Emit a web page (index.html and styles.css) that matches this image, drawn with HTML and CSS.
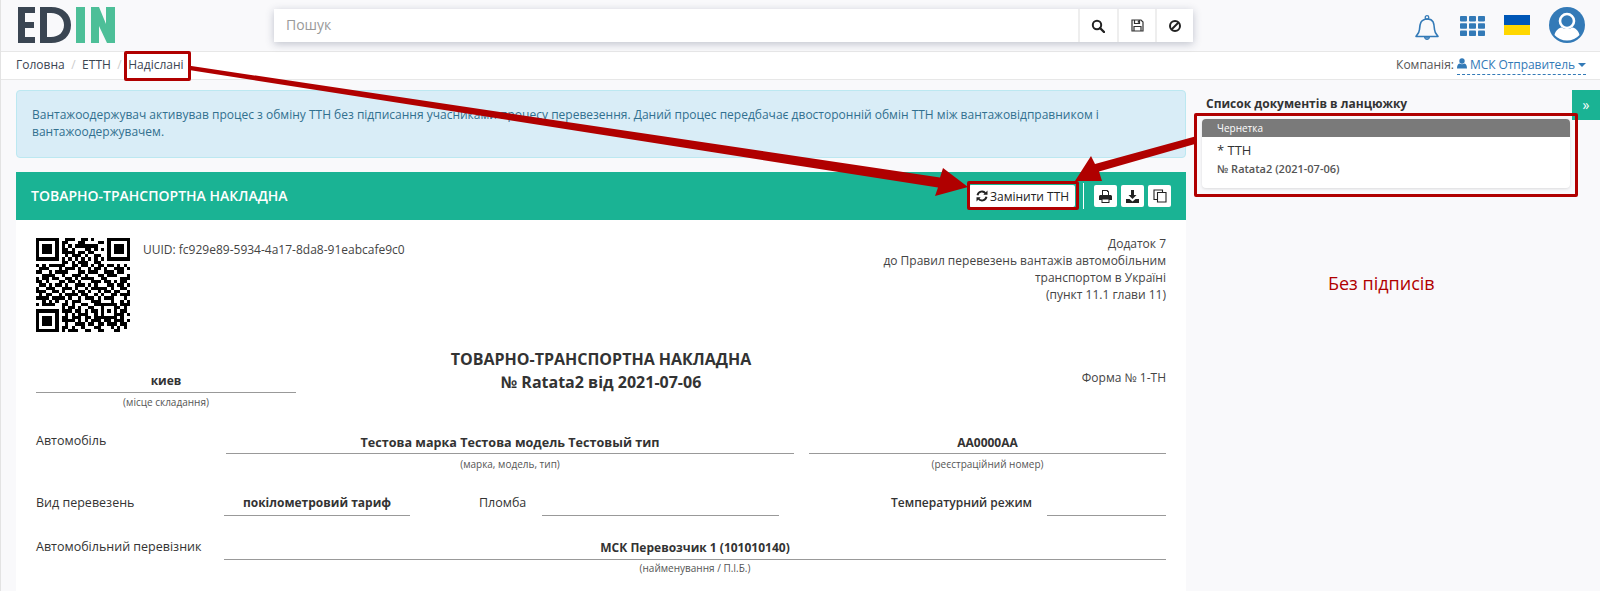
FILE: index.html
```html
<!DOCTYPE html>
<html lang="uk">
<head>
<meta charset="utf-8">
<title>ТОВАРНО-ТРАНСПОРТНА НАКЛАДНА</title>
<link rel="stylesheet" href="styles.css">
</head>
<body>
<div class="page">
  <header class="topbar">
    <svg class="logo" width="100" height="36" viewBox="0 0 100 36" aria-label="EDIN">
      <path fill="#3a4552" d="M0 0h17v6H7v9h9v6H7v9h10v6H0zM22 0h11c12 0 20 7 20 18s-8 18-20 18H22zm7 6v24h4c8 0 13-5 13-12S41 6 33 6z"/>
      <path fill="#4dbf98" d="M58 0h9v36h-9zM73 0h8l7 17V0h9v36h-8L81 19v17h-8z"/>
    </svg>
    <div class="search">
      <div class="search-input">Пошук</div>
      <button class="search-btn"><svg width="14" height="14" viewBox="0 0 14 14"><circle cx="6" cy="6" r="4.2" fill="none" stroke="#222" stroke-width="2"/><path d="M9 9l4 4" stroke="#222" stroke-width="2.4" stroke-linecap="round"/></svg></button>
      <button class="search-btn"><svg width="13" height="13" viewBox="0 0 13 13"><path fill="none" stroke="#333" stroke-width="1.2" d="M1 1h9l2 2v9H1z"/><path fill="none" stroke="#333" stroke-width="1.2" d="M3.5 1v3.5h5V1M3 12V7.5h7V12"/><path fill="#333" d="M6.8 1.6h1.2v2.2H6.8z"/></svg></button>
      <button class="search-btn"><svg width="14" height="14" viewBox="0 0 14 14"><circle cx="7" cy="7" r="5" fill="none" stroke="#222" stroke-width="2"/><path d="M3.5 10.5l7-7" stroke="#222" stroke-width="2"/></svg></button>
    </div>
    <div class="top-icons">
      <svg class="ic-bell" width="24" height="28" viewBox="0 0 24 28"><path fill="none" stroke="#337ab7" stroke-width="1.6" stroke-linejoin="round" d="M1 22.5c0-1 3-2 3.5-7 .4-5 .6-10 7.500-10.500s7.100 5.500 7.500 10.500c.5 5 3.500 6 3.500 7z"/><circle cx="12" cy="3.500" r="1.800" fill="none" stroke="#337ab7" stroke-width="1.300"/><path fill="#6d9cc7" stroke="#337ab7" d="M9.500 23a2.500 2.500 0 0 0 5 0z"/></svg>
      <svg class="ic-grid" width="25" height="20" viewBox="0 0 25 20"><g fill="#337ab7"><rect width="7" height="5.400" rx=".8"/><rect x="9" width="7" height="5.400" rx=".8"/><rect x="18" width="7" height="5.400" rx=".8"/><rect y="7.300" width="7" height="5.400" rx=".8"/><rect x="9" y="7.300" width="7" height="5.400" rx=".8"/><rect x="18" y="7.300" width="7" height="5.400" rx=".8"/><rect y="14.600" width="7" height="5.400" rx=".8"/><rect x="9" y="14.600" width="7" height="5.400" rx=".8"/><rect x="18" y="14.600" width="7" height="5.400" rx=".8"/></g></svg>
      <svg class="ic-flag" width="26" height="20" viewBox="0 0 26 20"><rect width="26" height="10" fill="#0057b7"/><rect y="10" width="26" height="10" fill="#ffd700"/></svg>
      <svg class="ic-user" width="36" height="36" viewBox="0 0 36 36"><circle cx="18" cy="18" r="18" fill="#337ab7"/><circle cx="18" cy="14" r="7" fill="#337ab7" stroke="#fff" stroke-width="2.600"/><path fill="#fff" d="M5.500 28c1-5 5-7.500 7.500-7.500 1.500 1 3 1.500 5 1.500s3.500-.5 5-1.500c2.500 0 6.500 2.500 7.500 7.500-3 3.500-7.500 5.500-12.500 5.500S8.500 31.500 5.500 28z"/></svg>
    </div>
  </header>

  <nav class="crumbs">
    <ol class="crumb-list">
      <li>Головна</li><li class="sep">/</li><li>ЕТТН</li><li class="sep">/</li><li>Надіслані</li>
    </ol>
    <div class="company">Компанія:
      <span class="company-link"><svg width="10" height="11" viewBox="0 0 10 11"><circle cx="5" cy="3" r="2.700" fill="#337ab7"/><path fill="#337ab7" d="M0 10.500C0 7.500 1 6 2.500 5.500c1.500 1 3.500 1 5 0C9 6 10 7.500 10 10.500z"/></svg> МСК Отправитель <i class="caret"></i></span>
    </div>
  </nav>

  <main class="main">
    <section class="content">
      <div class="alert">Вантажоодержувач активував процес з обміну ТТН без підписання учасниками процесу перевезення. Даний процес передбачає двосторонній обмін ТТН між вантажовідправником і вантажоодержувачем.</div>

      <div class="doc-bar">
        <h2 class="doc-bar-title">ТОВАРНО-ТРАНСПОРТНА НАКЛАДНА</h2>
        <div class="doc-actions">
          <button class="btn btn-text"><svg width="12" height="12" viewBox="0 0 12 12"><path fill="none" stroke="#222" stroke-width="1.900" d="M1.500 5.200A4.500 4.500 0 0 1 9.600 3.500M10.500 6.800A4.500 4.500 0 0 1 2.400 8.500"/><path fill="#222" d="M11.500.6v4.200H7.300zM.5 11.400V7.200h4.200z"/></svg> Замінити ТТН</button>
          <span class="divider"></span>
          <button class="btn btn-icon"><svg width="13" height="13" viewBox="0 0 13 13"><path fill="#222" d="M3 0h5.500L10 1.500V5H9V2H8V1H4v4H3zM0 6.500C0 5.700.7 5 1.500 5h10c.8 0 1.500.7 1.500 1.500V10h-2.500v3h-8v-3H0zm3.500 3v2.500h6V9.500z"/></svg></button>
          <button class="btn btn-icon"><svg width="13" height="13" viewBox="0 0 13 13"><path fill="#222" d="M5 0h3v5h2.500L6.500 9 2.500 5H5zM0 9h3.500l3 2.500 3-2.500H13v4H0z"/></svg></button>
          <button class="btn btn-icon"><svg width="14" height="14" viewBox="0 0 14 14"><path fill="none" stroke="#222" stroke-width="1.100" d="M9.500 3V1H1v9.500h3M4.500 3.500h8.500V13H4.500z"/></svg></button>
        </div>
      </div>

      <article class="doc">
        <div class="doc-head">
          <svg class="qr" width="94" height="94" viewBox="0 0 29 29" shape-rendering="crispEdges">
            <path fill-rule="evenodd" d="M0 0h7v7H0zM1 1v5h5V1zM2 2h3v3H2zM22 0h7v7h-7zM23 1v5h5V1zM24 2h3v3h-3zM0 22h7v7H0zM1 23v5h5v-5zM2 24h3v3H2zM20 20h5v5h-5zM21 21v3h3v-3zM22 22h1v1h-1z"/>
            <path fill="none" stroke="#000" d="M9 .5h3M14 .5h2M17 .5h1M8 1.500h2M13 1.500h2M19 1.500h2M8 2.500h1M10 2.500h1M12 2.500h7M8 3.500h2M11 3.500h1M15 3.500h2M18 3.500h1M20 3.500h1M8 4.500h4M13 4.500h2M16 4.500h2M9 5.500h1M11 5.500h3M15 5.500h1M18 5.500h2M8 6.500h1M10 6.500h1M12 6.500h1M14 6.500h1M16 6.500h1M18 6.500h1M20 6.500h1M8 7.500h2M11 7.500h1M13 7.500h3M18 7.500h2M0 8.500h1M2 8.500h1M4 8.500h5M11 8.500h2M14 8.500h2M17 8.500h1M19 8.500h2M22 8.500h2M25 8.500h1M27 8.500h1M1 9.500h3M7 9.500h1M9 9.500h3M13 9.500h1M16 9.500h1M18 9.500h2M21 9.500h1M24 9.500h3M28 9.500h1M0 10.500h2M4 10.500h1M6 10.500h4M13 10.500h2M16 10.500h3M21 10.500h3M25 10.500h2M2 11.500h4M8 11.500h1M11 11.500h3M15 11.500h1M19 11.500h2M22 11.500h3M28 11.500h1M0 12.500h1M2 12.500h2M5 12.500h2M9 12.500h2M12 12.500h1M14 12.500h4M20 12.500h2M26 12.500h1M27 12.500h2M0 13.500h2M3 13.500h1M7 13.500h2M10 13.500h2M13 13.500h1M17 13.500h3M21 13.500h2M24 13.500h1M26 13.500h2M1 14.500h2M4 14.500h1M6 14.500h2M9 14.500h1M12 14.500h3M16 14.500h1M18 14.500h1M22 14.500h2M25 14.500h2M28 14.500h1M0 15.500h1M3 15.500h3M8 15.500h3M12 15.500h1M15 15.500h1M17 15.500h5M23 15.500h1M26 15.500h2M0 16.500h3M5 16.500h2M8 16.500h1M11 16.500h1M13 16.500h2M16 16.500h1M19 16.500h1M21 16.500h2M24 16.500h2M28 16.500h1M1 17.500h1M3 17.500h2M7 17.500h1M9 17.500h4M14 17.500h2M18 17.500h1M20 17.500h1M23 17.500h2M26 17.500h3M0 18.500h4M5 18.500h4M10 18.500h1M13 18.500h1M15 18.500h3M19 18.500h1M21 18.500h3M27 18.500h1M2 19.500h1M4 19.500h1M6 19.500h1M9 19.500h1M11 19.500h3M17 19.500h3M23 19.500h1M26 19.500h1M28 19.500h1M0 20.500h1M2 20.500h4M8 20.500h2M11 20.500h1M14 20.500h2M18 20.500h2M26 20.500h3M8 21.500h1M10 21.500h2M13 21.500h1M16 21.500h2M25 21.500h1M27 21.500h1M8 22.500h3M12 22.500h2M15 22.500h1M17 22.500h2M26 22.500h2M9 23.500h1M11 23.500h1M13 23.500h3M18 23.500h1M25 23.500h2M28 23.500h1M8 24.500h2M11 24.500h3M15 24.500h2M18 24.500h2M26 24.500h1M8 25.500h4M13 25.500h1M15 25.500h1M17 25.500h3M21 25.500h2M24 25.500h3M28 25.500h1M9 26.500h1M12 26.500h3M16 26.500h2M19 26.500h2M22 26.500h3M26 26.500h2M8 27.500h2M11 27.500h1M14 27.500h1M18 27.500h2M23 27.500h1M25 27.500h1M27 27.500h1M8 28.500h1M10 28.500h3M15 28.500h2M19 28.500h2M24 28.500h2"/>
          </svg>
          <div class="uuid">UUID: fc929e89-5934-4a17-8da8-91eabcafe9c0</div>
          <div class="annex">Додаток 7<br>до Правил перевезень вантажів автомобільним<br>транспортом в Україні<br>(пункт 11.1 глави 11)</div>
        </div>

        <div class="title-row">
          <div class="field place">
            <div class="value">киев</div>
            <div class="caption">(місце складання)</div>
          </div>
          <h1 class="doc-title">ТОВАРНО-ТРАНСПОРТНА НАКЛАДНА<br>№ Ratata2 від 2021-07-06</h1>
          <div class="form-no">Форма № 1-ТН</div>
        </div>

        <div class="row row-car">
          <div class="label label-car">Автомобіль</div>
          <div class="field f-car"><div class="value">Тестова марка Тестова модель Тестовый тип</div><div class="caption">(марка, модель, тип)</div></div>
          <div class="field f-reg"><div class="value">АА0000АА</div><div class="caption">(реєстраційний номер)</div></div>
        </div>

        <div class="row row-kind">
          <div class="label label-kind">Вид перевезень</div>
          <div class="field f-kind"><div class="value">покілометровий тариф</div></div>
          <div class="label label-seal">Пломба</div>
          <div class="field f-seal"><div class="value">&nbsp;</div></div>
          <div class="label label-temp">Температурний режим</div>
          <div class="field f-temp"><div class="value">&nbsp;</div></div>
        </div>

        <div class="row row-carrier">
          <div class="label label-carrier">Автомобільний перевізник</div>
          <div class="field f-carrier"><div class="value">МСК Перевозчик 1 (101010140)</div><div class="caption">(найменування / П.І.Б.)</div></div>
        </div>
      </article>
    </section>

    <aside class="side">
      <h3 class="side-title">Список документів в ланцюжку</h3>
      <div class="chain-card">
        <div class="chain-status">Чернетка</div>
        <div class="chain-body">
          <div class="chain-name">* ТТН</div>
          <div class="chain-no">№ Ratata2 (2021-07-06)</div>
        </div>
      </div>
    </aside>
    <button class="side-toggle">»</button>
  </main>

  <div class="note">Без підписів</div>
  <div class="mark mark-crumb"></div>
  <div class="mark mark-btn"></div>
  <div class="mark mark-card"></div>
  <svg class="arrows" width="1600" height="591" viewBox="0 0 1600 591">
    <path fill="#b00000" d="M188 65.500L189 70 938 187.500 935 196 968 187 943 168 940 177.500z"/>
    <path fill="#b00000" d="M1195 136.500L1195 144 1099 171.500 1102 181 1075 181 1091 156 1095 164z"/>
  </svg>
</div>
</body>
</html>
```

FILE: styles.css
```css
* { box-sizing: border-box; }
html, body { margin: 0; height: 591px; overflow: hidden; }
body { font: 12px/17px "Open Sans", "Noto Sans", sans-serif; color: #333; background: #f9f9fb; }
h1, h2, h3 { margin: 0; }
button { font: inherit; border: 0; padding: 0; color: inherit; }
.page { position: relative; height: 591px; border-left: 1px solid #e3e3e3; overflow: hidden; }

.topbar { height: 52px; display: flex; align-items: flex-start; border-bottom: 1px solid #e7e7e7; }
.logo { margin: 7px 0 0 17px; flex: none; }
.search { display: flex; gap: 2px; width: 919px; height: 33px; margin: 9px 0 0 156px; background: #eee; box-shadow: 0 2px 8px rgba(60,70,100,.3); }
.search-input { flex: 1; background: #fff; padding: 0 12px; line-height: 31px; font-size: 14px; color: #9a9a9a; }
.search-btn { width: 36px; background: #fff; display: flex; align-items: center; justify-content: center; }
.search-btn:nth-child(2) { width: 37px; padding-right: 2px; }
.top-icons { display: flex; align-items: center; margin-left: 222px; height: 50px; }
.ic-bell { margin-top: 5px; }
.ic-grid { margin-left: 21px; margin-top: 2px; }
.ic-flag { margin-left: 19px; margin-top: -1px; }
.ic-user { margin-left: 19px; margin-top: -1px; }

.crumbs { height: 28px; display: flex; justify-content: space-between; align-items: center; padding: 0 14px 2px 15px; background: #fff; border-bottom: 1px solid #e7e7e7; }
.crumb-list { display: flex; list-style: none; margin: 0; padding: 0; gap: 6.5px; color: #3a4552; }
.sep { color: #ccc; }
.company { color: #555; }
.company-link { color: #337ab7; border-bottom: 1px dashed #337ab7; padding-bottom: 1px; letter-spacing: -.08px; }
.caret { display: inline-block; width: 0; height: 0; border: 4px solid transparent; border-top-color: #337ab7; border-bottom: 0; vertical-align: 2px; }

.main { display: flex; align-items: flex-start; padding-top: 10px; }
.content { width: 1170px; margin-left: 15px; flex: none; }
.alert { height: 68px; padding: 15px 15px; background: #d9edf7; border: 1px solid #bce8f1; border-radius: 4px; color: #31708f; }

.doc-bar { height: 48px; margin-top: 14px; padding: 0 15px; display: flex; align-items: center; justify-content: space-between; background: #1ab394; }
.doc-bar-title { font-size: 14px; font-weight: 600; color: #fff; padding-bottom: 2px; }
.doc-actions { display: flex; align-items: center; }
.btn { background: #fff; border-radius: 2px; height: 22px; display: flex; align-items: center; color: #222; }
.btn-text { width: 106px; gap: 2px; padding-left: 7px; }
.btn-icon { width: 23px; margin-left: 4px; justify-content: center; }
.divider { width: 1px; height: 26px; background: #fff; margin: 0 10px 0 8px; }
.divider + .btn-icon { margin-left: 0; }

.doc { height: 372px; padding: 18px 20px; background: #fff; }
.doc-head { display: flex; height: 94px; }
.uuid { margin: 3px 0 0 13px; color: #444; }
.annex { margin-left: auto; margin-top: -3px; text-align: right; width: 300px; color: #444; }

.title-row { display: grid; grid-template-columns: 1fr auto 1fr; margin-top: 16px; height: 62px; }
.doc-title { font-size: 16px; line-height: 23px; font-weight: 700; text-align: center; }
.place { width: 260px; align-self: end; margin-bottom: 1px; }
.place .value { padding-bottom: 3px; }
.form-no { text-align: right; padding-top: 21px; color: #444; }

.field { text-align: center; }
.value { font-weight: 700; padding-bottom: 2px; border-bottom: 1px solid #999; color: #333; }
.caption { font-size: 10px; line-height: 14px; margin-top: 2px; color: #555; }
.row { display: flex; }
.row-car { margin-top: 24px; }
.row-car .caption { margin-top: 3px; }
.row-kind { margin-top: 23px; }
.row-kind .value { padding-bottom: 4px; }
.row-carrier { margin-top: 23px; }
.label { font-size: 12.5px; font-weight: 500; color: #333; }
.label-car { width: 190px; margin-top: -2px; }
.label-kind { width: 188px; }
.label-carrier { width: 188px; margin-top: -1px; }
.label-seal { margin-left: 69px; width: 63px; }
.label-temp { margin-left: 112px; width: 156px; font-size: 12px; font-weight: 600; }
.f-car { width: 568px; }
.f-car .value { font-size: 12.6px; }
.f-reg { width: 357px; margin-left: 15px; }
.f-kind { width: 186px; }
.f-seal { width: 237px; }
.f-temp { width: 119px; }
.f-carrier { width: 942px; }
.f-carrier .value { padding-bottom: 3px; }
.f-carrier .caption { margin-top: 1px; }

.side { width: 368px; margin-left: 16px; flex: none; }
.side-title { font-size: 12px; line-height: 17px; font-weight: 700; padding: 5px 0 7px 4px; color: #333; }
.chain-card { background: #fff; border-radius: 4px; box-shadow: 0 1px 3px rgba(0,0,0,.12); height: 69px; overflow: hidden; }
.chain-status { height: 18px; padding-left: 15px; background: #7a7a7a; color: #fff; font-size: 10px; line-height: 18px; }
.chain-body { padding: 4px 15px; }
.chain-name { font-size: 13px; line-height: 18px; }
.chain-no { font-size: 11px; line-height: 20px; font-weight: 600; color: #555; }
.side-toggle { width: 28px; height: 30px; margin-left: 2px; background: #1ab394; color: #fff; font-size: 14px; line-height: 26px; flex: none; }

.note { position: absolute; left: 1327px; top: 272px; font-size: 18px; line-height: 22px; color: #b00000; }
.mark { position: absolute; border: 3px solid #b00000; border-radius: 2px; }
.mark-crumb { left: 123px; top: 51px; width: 67px; height: 30px; }
.mark-btn { left: 966px; top: 181px; width: 112px; height: 29px; }
.mark-card { left: 1193px; top: 113px; width: 384px; height: 84px; }
.arrows { position: absolute; left: -1px; top: 0; pointer-events: none; }
```
